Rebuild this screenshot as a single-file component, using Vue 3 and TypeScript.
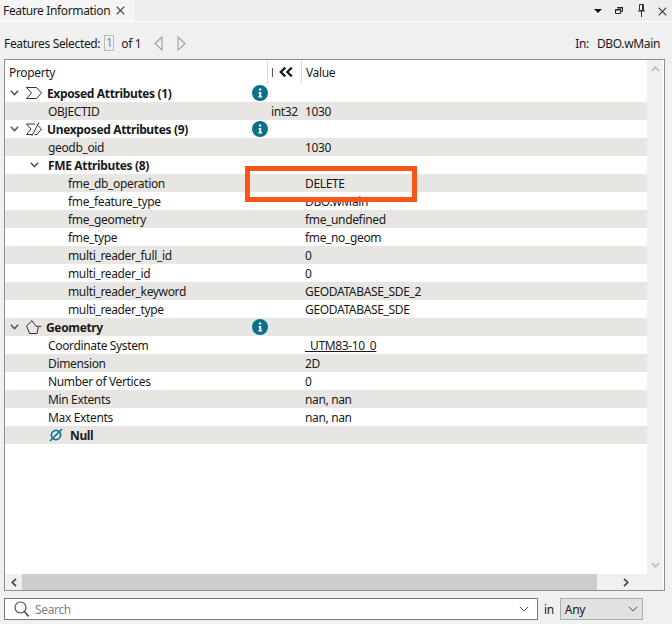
<script setup lang="ts">
interface Row {
  name: string
  type?: string
  value?: string
  level: number
  kind?: 'section' | 'sub' | 'null' | 'link'
  icon?: 'sum' | 'nosum' | 'geom'
  info?: boolean
}
const rows: Row[] = [
  { name: 'Exposed Attributes (1)', level: 0, kind: 'section', icon: 'sum', info: true },
  { name: 'OBJECTID', type: 'int32', value: '1030', level: 1 },
  { name: 'Unexposed Attributes (9)', level: 0, kind: 'section', icon: 'nosum', info: true },
  { name: 'geodb_oid', value: '1030', level: 1 },
  { name: 'FME Attributes (8)', level: 1, kind: 'sub' },
  { name: 'fme_db_operation', value: 'DELETE', level: 2 },
  { name: 'fme_feature_type', value: 'DBO.wMain', level: 2 },
  { name: 'fme_geometry', value: 'fme_undefined', level: 2 },
  { name: 'fme_type', value: 'fme_no_geom', level: 2 },
  { name: 'multi_reader_full_id', value: '0', level: 2 },
  { name: 'multi_reader_id', value: '0', level: 2 },
  { name: 'multi_reader_keyword', value: 'GEODATABASE_SDE_2', level: 2 },
  { name: 'multi_reader_type', value: 'GEODATABASE_SDE', level: 2 },
  { name: 'Geometry', level: 0, kind: 'section', icon: 'geom', info: true },
  { name: 'Coordinate System', value: '_UTM83-10_0', level: 1, kind: 'link' },
  { name: 'Dimension', value: '2D', level: 1 },
  { name: 'Number of Vertices', value: '0', level: 1 },
  { name: 'Min Extents', value: 'nan, nan', level: 1 },
  { name: 'Max Extents', value: 'nan, nan', level: 1 },
  { name: 'Null', level: 1, kind: 'null' },
]
</script>

<template>
  <div class="app">
    <header class="titlebar">
      <div class="tab">
        <span class="tab-title">Feature Information</span>
        <svg class="tab-x" width="9" height="9" viewBox="0 0 9 9"><path d="M.7.7l7.600 7.600M8.300.7L.7 8.300" stroke="#333" stroke-width="1.100" fill="none" /></svg>
      </div>
      <div class="window-tools">
        <svg class="t-arrow" width="8" height="4" viewBox="0 0 8 4"><path d="M0 0h8L4 4z" fill="#111" /></svg>
        <svg class="t-restore" width="8" height="7" viewBox="0 0 8 7"><path d="M2.500.5h5v4H6M.5 2.500h5.200v4H.5z" stroke="#222" fill="none" /><path d="M2.500 0h5.500v1.500H2.500zM.5 2h5.500v1.500H.5z" fill="#222" /></svg>
        <svg class="t-pin" width="7" height="13" viewBox="0 0 7 13"><path d="M1.500.5h4v6h-4zM0 7h7M3.500 7v6M4.500 1v5.500" stroke="#333" fill="none" /></svg>
        <svg class="t-close" width="9" height="9" viewBox="0 0 9 9"><path d="M.7.7l7.600 7.600M8.300.7L.7 8.300" stroke="#333" stroke-width="1.100" fill="none" /></svg>
      </div>
    </header>

    <div class="toolbar">
      <span>Features Selected:</span>
      <span class="page-box">1</span>
      <span class="of">of 1</span>
      <svg class="nav nav-first" width="9" height="15" viewBox="0 0 9 15"><path d="M8 1v13L1 7.500z" fill="none" stroke="#a0a0a0" stroke-width="1.100" /></svg>
      <svg class="nav" width="9" height="15" viewBox="0 0 9 15"><path d="M1 1v13l7-6.500z" fill="none" stroke="#a0a0a0" stroke-width="1.100" /></svg>
      <span class="in-label">In:</span>
      <span class="in-value">DBO.wMain</span>
    </div>

    <section class="panel">
      <div class="viewport">
        <div class="table">
          <div class="thead">
            <div class="th th-prop">Property</div>
            <div class="th th-type">
              <span class="clip">D</span>
              <svg width="14" height="10" viewBox="0 0 14 10"><path d="M6.300.6L1.800 5l4.500 4.400M12.800.6L8.300 5l4.500 4.400" fill="none" stroke="#1a1a1a" stroke-width="2.300" /></svg>
            </div>
            <div class="th th-val">Value</div>
          </div>
          <div v-for="(r, i) in rows" :key="r.name" class="row" :class="{ stripe: i % 2 === 1 }">
            <div class="prop" :class="[`lvl${r.level}`, r.kind]">
              <svg v-if="r.kind === 'section' || r.kind === 'sub'" class="chev" width="9" height="6" viewBox="0 0 9 6"><path d="M.8.8L4.500 4.600 8.200.8" fill="none" stroke="#555" stroke-width="1.500" /></svg>
              <svg v-if="r.icon === 'sum'" class="ico" width="16" height="12" viewBox="0 0 16 12"><path d="M.5.500h10l5 5.500-5 5.500H.5l5-5.500z" fill="none" stroke="#333" /></svg>
              <svg v-if="r.icon === 'nosum'" class="ico" width="16" height="14" viewBox="0 0 16 14"><path d="M9 2H.5l4.500 5-4.500 5.500H6M10.500 2.500l5 4.500-4.500 5.500H8.500" fill="none" stroke="#333" /><path d="M13 .3L6 13.700" stroke="#333" fill="none" /></svg>
              <svg v-if="r.icon === 'geom'" class="ico geom-ico" width="16" height="14" viewBox="0 0 16 14"><path d="M6 .7L.6 6l3 7.500h7.500l1.300-7.200h3M6 .7l4 5.600h2.500" fill="none" stroke="#333" /></svg>
              <svg v-if="r.kind === 'null'" class="null-ico" width="14" height="14" viewBox="0 0 14 14"><circle cx="7" cy="7" r="4.600" fill="none" stroke="#0f7a8c" stroke-width="1.700" /><path d="M1 13L13 1" stroke="#0f7a8c" stroke-width="1.700" /></svg>
              <span class="name">{{ r.name }}</span>
              <svg v-if="r.info" class="info" width="16" height="16" viewBox="0 0 16 16"><circle cx="8" cy="8" r="8" fill="#0d7088" /><path d="M7 3.500h2.200v2H7zM6.500 7h2.700v4.300h1v1.200H6.300v-1.200h1V8.200h-.8z" fill="#fff" /></svg>
            </div>
            <div class="type">{{ r.type }}</div>
            <div class="val" :class="{ link: r.kind === 'link' }">{{ r.value }}</div>
          </div>
        </div>
        <div class="highlight"></div>
      </div>
      <div class="vbar">
        <svg width="9" height="6" viewBox="0 0 9 6"><path d="M.8 5L4.500 1.200 8.200 5" fill="none" stroke="#bdbdbd" stroke-width="1.600" /></svg>
        <svg width="9" height="6" viewBox="0 0 9 6"><path d="M.8 1L4.500 4.800 8.200 1" fill="none" stroke="#bdbdbd" stroke-width="1.600" /></svg>
      </div>
      <div class="hbar">
        <div class="harrow">
          <svg width="6" height="9" viewBox="0 0 6 9"><path d="M5 .8L1.300 4.500 5 8.200" fill="none" stroke="#444" stroke-width="1.700" /></svg>
        </div>
        <div class="hthumb"></div>
        <div class="harrow right">
          <svg width="6" height="9" viewBox="0 0 6 9"><path d="M1 .8L4.700 4.500 1 8.200" fill="none" stroke="#444" stroke-width="1.700" /></svg>
        </div>
      </div>
      <div class="corner"></div>
    </section>

    <footer class="searchbar">
      <div class="search">
        <svg class="lens" width="16" height="17" viewBox="0 0 16 17"><circle cx="6.500" cy="6.500" r="5.500" fill="none" stroke="#444" stroke-width="1.100" /><path d="M10.500 10.500l4 4.800" stroke="#555" stroke-width="1.800" fill="none" /></svg>
        <span class="placeholder">Search</span>
        <svg class="caret" width="10" height="6" viewBox="0 0 10 6"><path d="M.8.8L5 5 9.200.8" fill="none" stroke="#555" /></svg>
      </div>
      <span class="in">in</span>
      <div class="combo">
        <span>Any</span>
        <svg width="10" height="6" viewBox="0 0 10 6"><path d="M.8.8L5 5 9.200.8" fill="none" stroke="#555" /></svg>
      </div>
    </footer>
  </div>
</template>

<style>
html, body { margin: 0; background: #f0f0f0; }
</style>

<style scoped>
.app {
  width: 672px;
  height: 624px;
  overflow: hidden;
  background: #f0f0f0;
  font-family: "Noto Sans", "Open Sans", sans-serif;
  font-size: 12px;
  letter-spacing: -0.35px;
  color: #1a1a1a;
  display: flex;
  flex-direction: column;
}
.titlebar {
  height: 22px;
  box-sizing: border-box;
  background: #eeeeee;
  border-bottom: 1px solid #fff;
  display: flex;
  justify-content: space-between;
  flex: none;
}
.tab {
  width: 134px;
  flex: none;
  padding-left: 3px;
  box-sizing: border-box;
  background: #f5f5f5;
  display: flex;
  align-items: center;
}
.tab-title { width: 113px; white-space: nowrap; flex: none; }
.window-tools {
  display: flex;
  align-items: flex-start;
  padding-right: 5px;
}
.t-arrow { margin-top: 9px; }
.t-restore { margin-top: 7px; margin-left: 13px; }
.t-pin { margin-top: 4px; margin-left: 15px; }
.t-close { margin-top: 7px; margin-left: 13px; }
.toolbar {
  height: 37px;
  flex: none;
  display: flex;
  align-items: center;
  padding: 5px 12px 0 4px;
  box-sizing: border-box;
  white-space: nowrap;
}
.page-box {
  width: 8px;
  height: 14px;
  margin-left: 4px;
  border: 1px solid #bbb;
  color: #888;
  text-align: center;
  line-height: 14px;
}
.of { margin-left: 7px; }
.nav-first { margin-left: 13px; }
.nav { margin-right: 14px; }
.in-label { margin-left: auto; color: #2a0a3a; }
.in-value { margin-left: 8px; }
.panel {
  height: 532px;
  flex: none;
  margin: 0 7px 0 4px;
  border: 1px solid #8a8f94;
  background: #fff;
  display: grid;
  grid-template-columns: 642px 16px;
  grid-template-rows: 514px 16px;
  box-sizing: border-box;
}
.viewport { position: relative; overflow: hidden; }
.thead {
  display: grid;
  grid-template-columns: 262px 35px 1fr;
  height: 24px;
}
.th { display: flex; align-items: center; height: 24px; box-sizing: border-box; }
.th-prop { padding-left: 4px; }
.th-type {
  border-left: 1px solid #dcdcdc;
  border-right: 1px solid #dcdcdc;
  padding-left: 3px;
  overflow: hidden;
}
.clip { width: 2px; overflow: hidden; flex: none; margin-right: 6px; }
.th-val { padding-left: 4px; }
.row {
  display: grid;
  grid-template-columns: 262px 35px 1fr;
  height: 18px;
  line-height: 20px;
  white-space: nowrap;
}
.row.stripe { background: #e7e6e2; }
.prop { display: flex; align-items: center; position: relative; height: 18px; }
.name { line-height: 18px; padding-top: 2px; }
.prop.lvl0 { padding-left: 5px; }
.prop.lvl1 { padding-left: 43px; }
.prop.lvl2 { padding-left: 63px; }
.prop.section, .prop.sub, .prop.null { font-weight: 700; }
.prop.section .chev { margin-right: 7px; }
.prop.section .ico { margin-right: 5px; }
.prop.section .geom-ico { margin-right: 4px; }
.prop.sub { padding-left: 25px; }
.prop.sub .chev { margin-right: 9px; }
.prop.null { padding-left: 44px; }
.null-ico { margin-right: 7px; }
.info { position: absolute; left: 247px; top: 1px; }
.type { padding-left: 4px; }
.val { padding-left: 3px; }
.val.link { text-decoration: underline; }
.highlight {
  position: absolute;
  left: 240px;
  top: 106px;
  width: 162px;
  height: 26px;
  border: 5px solid #f95516;
}
.vbar {
  background: #f0f0f0;
  display: flex;
  flex-direction: column;
  align-items: center;
  justify-content: space-between;
  padding: 6px 0;
  box-sizing: border-box;
}
.hbar {
  background: #f0f0f0;
  display: flex;
  align-items: stretch;
}
.harrow {
  width: 17px;
  flex: none;
  display: flex;
  align-items: center;
  justify-content: center;
}
.hthumb { width: 575px; background: #cdcdcd; }
.harrow.right { margin-left: auto; width: 34px; justify-content: flex-start; padding-left: 10px; box-sizing: border-box; }
.corner { background: #f0f0f0; }
.searchbar {
  display: flex;
  align-items: center;
  height: 22px;
  margin-top: 7px;
  padding-left: 4px;
  flex: none;
}
.search {
  width: 534px;
  height: 22px;
  box-sizing: border-box;
  background: #fff;
  border: 1px solid #7a7a7a;
  display: flex;
  align-items: center;
  padding: 0 6px 0 9px;
}
.lens { margin-right: 5px; }
.placeholder { color: #7f7f7f; }
.caret { margin-left: auto; margin-right: 2px; }
.in { margin-left: 6px; }
.combo {
  margin-left: 6px;
  width: 83px;
  height: 22px;
  box-sizing: border-box;
  background: #e1e1e1;
  border: 1px solid #adadad;
  display: flex;
  align-items: center;
  justify-content: space-between;
  padding: 0 4px 0 4px;
}
</style>
